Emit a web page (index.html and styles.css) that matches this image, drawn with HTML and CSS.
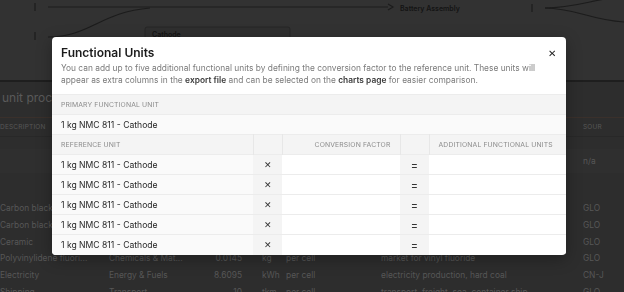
FILE: index.html
```html
<!DOCTYPE html>
<html lang="en">

<head>
    <meta charset="UTF-8">
    <meta name="viewport" content="width=device-width, initial-scale=1.0">
    <title>Functional Units</title>
    <link rel="stylesheet" href="styles.css">
</head>

<body>
    <!-- Process diagram -->
    <div class="diagram">
        <svg width="624" height="80" viewBox="0 0 624 80">
            <line x1="35" y1="3" x2="35" y2="11" class="tick" />
            <line x1="35" y1="32" x2="35" y2="40" class="tick" />
            <line x1="48" y1="7" x2="388" y2="7" class="edge" />
            <path d="M388 4 L393 7 L388 10" class="edge" />
            <line x1="532" y1="4" x2="532" y2="12" class="tick" />
            <path d="M545 8 C 575 8, 590 0, 624 -4" class="edge" />
            <path d="M545 8 C 575 8, 590 20, 624 22" class="edge" />
            <path d="M48 37 C 90 37, 100 12, 150 8" class="edge" />
            <rect x="145" y="27" width="145" height="30" rx="2" class="node" />
            <text x="152" y="37" class="node-label">Cathode</text>
            <text x="400" y="11" class="node-label">Battery Assembly</text>
        </svg>
    </div>

    <!-- Unit processes -->
    <div class="processes">
        <h2>unit processes</h2>
        <div class="proc-row proc-head">
            <span class="c-desc">Description</span>
            <span class="c-cat"></span>
            <span class="c-amt"></span>
            <span class="c-unit"></span>
            <span class="c-per"></span>
            <span class="c-act"></span>
            <span class="c-src">Sour</span>
        </div>
        <div class="proc-row proc-na">
            <span class="c-desc"></span>
            <span class="c-cat"></span>
            <span class="c-amt"></span>
            <span class="c-unit"></span>
            <span class="c-per"></span>
            <span class="c-act"></span>
            <span class="c-src">n/a</span>
        </div>
        <div class="proc-list">
            <div class="proc-row">
                <span class="c-desc">Carbon black</span><span class="c-cat">Chemicals &amp; Mat...</span><span class="c-amt">0.0012</span><span class="c-unit">kg</span><span class="c-per">per cell</span><span class="c-act">market for carbon black</span><span class="c-src">GLO</span>
            </div>
            <div class="proc-row">
                <span class="c-desc">Carbon black</span><span class="c-cat">Chemicals &amp; Mat...</span><span class="c-amt">0.0008</span><span class="c-unit">kg</span><span class="c-per">per cell</span><span class="c-act">market for carbon black</span><span class="c-src">GLO</span>
            </div>
            <div class="proc-row">
                <span class="c-desc">Ceramic</span><span class="c-cat">Chemicals &amp; Mat...</span><span class="c-amt">0.0031</span><span class="c-unit">kg</span><span class="c-per">per cell</span><span class="c-act">market for ceramic tile</span><span class="c-src">GLO</span>
            </div>
            <div class="proc-row">
                <span class="c-desc">Polyvinylidene fluori...</span><span class="c-cat">Chemicals &amp; Mat...</span><span class="c-amt">0.0145</span><span class="c-unit">kg</span><span class="c-per">per cell</span><span class="c-act">market for vinyl fluoride</span><span class="c-src">GLO</span>
            </div>
            <div class="proc-row">
                <span class="c-desc">Electricity</span><span class="c-cat">Energy &amp; Fuels</span><span class="c-amt">8.6095</span><span class="c-unit">kWh</span><span class="c-per">per cell</span><span class="c-act">electricity production, hard coal</span><span class="c-src">CN-J</span>
            </div>
            <div class="proc-row">
                <span class="c-desc">Shipping</span><span class="c-cat">Transport</span><span class="c-amt">10</span><span class="c-unit">tkm</span><span class="c-per">per cell</span><span class="c-act">transport, freight, sea, container ship</span><span class="c-src">GLO</span>
            </div>
        </div>
    </div>

    <!-- Functional units modal -->
    <div class="backdrop">
        <div class="modal">
            <div class="modal-head">
                <h3 class="modal-title">Functional Units</h3>
                <button class="close" aria-label="Close">&#x2715;</button>
                <p class="modal-desc">You can add up to five additional functional units by defining the conversion factor to the reference unit. These units will appear as extra columns in the <b>export file</b> and can be selected on the <b>charts page</b> for easier comparison.</p>
            </div>

            <table class="fu-table">
                <colgroup>
                    <col class="w-ref">
                    <col class="w-op">
                    <col class="w-factor">
                    <col class="w-op">
                    <col class="w-add">
                </colgroup>
                <tr class="head">
                    <th colspan="5">Primary functional unit</th>
                </tr>
                <tr class="primary">
                    <td colspan="5">1 kg NMC 811 - Cathode</td>
                </tr>
                <tr class="head">
                    <th>Reference unit</th>
                    <th></th>
                    <th class="right">Conversion factor</th>
                    <th></th>
                    <th>Additional functional units</th>
                </tr>
                <tr>
                    <td class="ref">1 kg NMC 811 - Cathode</td>
                    <td class="op">&#x2715;</td>
                    <td><input class="cell-input" type="text"></td>
                    <td class="op eq">=</td>
                    <td><input class="cell-input" type="text"></td>
                </tr>
                <tr>
                    <td class="ref">1 kg NMC 811 - Cathode</td>
                    <td class="op">&#x2715;</td>
                    <td><input class="cell-input" type="text"></td>
                    <td class="op eq">=</td>
                    <td><input class="cell-input" type="text"></td>
                </tr>
                <tr>
                    <td class="ref">1 kg NMC 811 - Cathode</td>
                    <td class="op">&#x2715;</td>
                    <td><input class="cell-input" type="text"></td>
                    <td class="op eq">=</td>
                    <td><input class="cell-input" type="text"></td>
                </tr>
                <tr>
                    <td class="ref">1 kg NMC 811 - Cathode</td>
                    <td class="op">&#x2715;</td>
                    <td><input class="cell-input" type="text"></td>
                    <td class="op eq">=</td>
                    <td><input class="cell-input" type="text"></td>
                </tr>
                <tr>
                    <td class="ref">1 kg NMC 811 - Cathode</td>
                    <td class="op">&#x2715;</td>
                    <td><input class="cell-input" type="text"></td>
                    <td class="op eq">=</td>
                    <td><input class="cell-input" type="text"></td>
                </tr>
            </table>
        </div>
    </div>
</body>

</html>
```

FILE: styles.css
```css
/* Page behind the modal (already dimmed) */
body {
    font-family: Inter, "Noto Sans", sans-serif;
    background-color: #2d2d2d;
    color: #575757;
    margin: 0;
    width: 624px;
    height: 292px;
    overflow: hidden;
}

.diagram {
    height: 80px;
    background-color: #323232;
    border-bottom: 2px solid #1e1e1e;
}

.diagram svg {
    display: block;
}

.tick,
.edge {
    stroke: #1c1c1c;
    stroke-width: 1.2;
    fill: none;
}

.node {
    fill: #2f2f2f;
    stroke: #262626;
}

.node-label {
    font-family: Inter, sans-serif;
    font-size: 7px;
    font-weight: 600;
    fill: #141414;
}

.processes h2 {
    font-size: 12px;
    font-weight: 400;
    color: #5a5a5a;
    margin: 0;
    padding: 8px 2px 0;
    height: 27px;
    border-bottom: 1px solid #3a302b;
}

.proc-row {
    display: flex;
    height: 16.7px;
    align-items: center;
    font-size: 8.4px;
    white-space: nowrap;
}

.proc-head {
    height: 18px;
    font-size: 6.5px;
    text-transform: uppercase;
    letter-spacing: 0.2px;
    border-bottom: 1px solid #282828;
}

.proc-na {
    height: 24px;
    margin-top: 12px;
    background-color: #2f2f2f;
}

.proc-list {
    padding-top: 27px;
}

.c-desc { width: 109px; overflow: hidden; }
.c-cat { width: 84px; }
.c-amt { width: 49px; text-align: right; }
.c-unit { width: 20px; padding-left: 20px; }
.c-per { width: 95px; padding-left: 4px; }
.c-act { width: 202px; }
.c-src { width: 22px; overflow: hidden; }

/* Modal */
.backdrop {
    position: fixed;
    inset: 0;
}

.modal {
    width: 514px;
    margin: 37px 0 0 52px;
    background-color: #fff;
    border-radius: 4px;
    overflow: hidden;
    box-shadow: 0 4px 16px rgba(0, 0, 0, 0.3);
}

.modal-head {
    position: relative;
    padding: 9px 9px 8px;
}

.modal-title {
    font-size: 12px;
    font-weight: 600;
    line-height: 14px;
    color: #1b1b1b;
    margin: 0 0 2px;
}

.close {
    position: absolute;
    top: 11px;
    right: 10px;
    border: none;
    background: none;
    padding: 0;
    font-size: 9.5px;
    color: #222;
    cursor: pointer;
}

.modal-desc {
    font-size: 8.4px;
    line-height: 12px;
    color: #7b7b7b;
    margin: 0;
}

.modal-desc b {
    font-weight: 600;
    color: #3a3a3a;
}

.fu-table {
    width: 514px;
    border-collapse: collapse;
    table-layout: fixed;
}

.w-ref { width: 201px; }
.w-op { width: 29px; }
.w-factor { width: 118px; }
.w-add { width: 137px; }

.fu-table tr {
    height: 20px;
    border-top: 1px solid #ececec;
}

.fu-table th {
    background-color: #f4f4f4;
    font-size: 6.8px;
    font-weight: 400;
    text-transform: uppercase;
    letter-spacing: 0.15px;
    color: #8a8a8a;
    text-align: left;
    padding: 0 9px;
    border-left: 1px solid #e7e7e7;
}

.fu-table th:first-child {
    border-left: none;
}

.fu-table th.right {
    text-align: right;
}

.fu-table td {
    padding: 0;
    font-size: 8.6px;
    color: #1f1f1f;
}

.fu-table .primary td {
    background-color: #fafafa;
    padding: 0 9px;
}

.fu-table td.ref {
    background-color: #fafafa;
    padding: 0 9px;
}

.fu-table td.op {
    background-color: #f4f4f4;
    text-align: center;
    font-size: 9px;
    color: #333;
}

.fu-table td.eq {
    font-size: 11px;
}

.cell-input {
    display: block;
    width: 100%;
    height: 19px;
    border: none;
    padding: 0 8px;
    box-sizing: border-box;
    background: #fff;
}
```
